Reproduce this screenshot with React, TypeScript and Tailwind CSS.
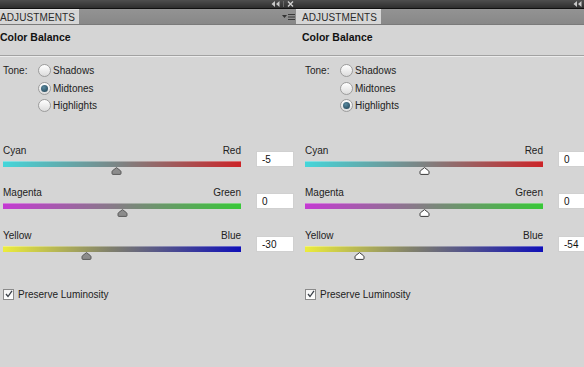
import React from "react";

type PanelProps = {
  tone: "Shadows" | "Midtones" | "Highlights";
  values: [number, number, number];
  activeThumb: boolean;
  showMenu: boolean;
};

const sliders = [
  { l: "Cyan", r: "Red", grad: "bg-[linear-gradient(to_right,#44d6da,#7e8282_50%,#cc2428)]" },
  { l: "Magenta", r: "Green", grad: "bg-[linear-gradient(to_right,#c43ad2,#828082_50%,#38c838)]" },
  { l: "Yellow", r: "Blue", grad: "bg-[linear-gradient(to_right,#ecec3c,#80806c_45%,#1010b8)]" },
];

function Radio({ on }: { on: boolean }) {
  return (
    <div className="w-[13px] h-[13px] rounded-full border border-[#9c9c9c] bg-[linear-gradient(#ffffff,#dcdcdc)] flex items-center justify-center">
      {on && <div className="w-[7px] h-[7px] rounded-full bg-[radial-gradient(circle_at_40%_35%,#5a8aa0,#1e3e50)]" />}
    </div>
  );
}

function Thumb({ active }: { active: boolean }) {
  return (
    <svg width="11" height="8" viewBox="0 0 11 8">
      <path
        d="M5.5 0.6 L9.6 3.8 Q10 4.2 10 5 L10 6.4 Q10 7.4 9 7.4 L2 7.4 Q1 7.4 1 6.4 L1 5 Q1 4.2 1.4 3.8 Z"
        fill={active ? "#ffffff" : "#8c8c8c"}
        stroke={active ? "#3a3a3a" : "#5a5a5a"}
        strokeWidth="1"
      />
    </svg>
  );
}

function Panel({ tone, values, activeThumb, showMenu }: PanelProps) {
  return (
    <div className="w-[302px] shrink-0 flex flex-col">
      {/* top bar */}
      <div className="h-[8px] bg-[linear-gradient(#4e4e4e,#2e2e2e)] flex items-center justify-end pr-[2px] gap-[3px]">
        <svg width="9" height="6" viewBox="0 0 9 6">
          <path d="M4 0 L0.5 3 L4 6 Z M8.5 0 L5 3 L8.5 6 Z" fill="#c8c8c8" />
        </svg>
        <div className="w-px h-[6px] bg-[#6a6a6a]" />
        <svg width="7" height="6" viewBox="0 0 7 6">
          <path d="M1 0.5 L6 5.5 M6 0.5 L1 5.5" stroke="#d0d0d0" strokeWidth="1.4" />
        </svg>
      </div>
      <div className="h-px bg-[#111]" />
      {/* tab strip */}
      <div className="h-[16px] bg-[linear-gradient(#939393,#888888)] flex items-stretch border-b border-[#7a7a7a]">
        <div className="w-[85px] bg-[#d6d6d6] border-t border-[#e6e6e6] pl-[6px] flex items-center text-[10px] text-[#2a2a2a] tracking-[0.1px]">
          ADJUSTMENTS
        </div>
        {showMenu && (
          <div className="ml-auto mr-[1px] flex items-center gap-[1px]">
            <svg width="5" height="3" viewBox="0 0 5 3">
              <path d="M0 0 L5 0 L2.5 3 Z" fill="#333" />
            </svg>
            <svg width="7" height="6" viewBox="0 0 7 6">
              <path d="M0 0.5 H7 M0 3 H7 M0 5.5 H7" stroke="#3a3a3a" strokeWidth="1" />
            </svg>
          </div>
        )}
      </div>
      {/* body */}
      <div className="flex flex-col">
        <div className="pl-[6px] pt-[6px] h-[19px] leading-[13px] text-[10.5px] font-bold text-[#111]">Color Balance</div>
        <div className="mt-[11px] h-px bg-[#a2a2a2]" />
        <div className="h-px bg-[#ececec]" />
        {/* Tone */}
        <div className="mt-[4px] flex pl-[9px]">
          <div className="w-[35px] h-[18px] flex items-center text-[10px] text-[#222]">Tone:</div>
          <div className="flex flex-col">
            {(["Shadows", "Midtones", "Highlights"] as const).map((t, i) => (
              <div key={t} className={`${i === 2 ? "h-[17px]" : "h-[18px]"} flex items-center gap-[2px]`}>
                <Radio on={t === tone} />
                <span className="text-[10px] text-[#222]">{t}</span>
              </div>
            ))}
          </div>
        </div>
        {/* sliders */}
        <div className="mt-[29px] flex flex-col pl-[9px]">
          {sliders.map((s, i) => {
            const v = values[i];
            const pos = ((v + 100) / 200) * 238;
            return (
              <div key={s.l} className={`flex ${i === 1 ? "h-[43px]" : "h-[42px]"}`}>
                <div className="w-[238px] flex flex-col">
                  <div className="mt-[2px] h-[12px] flex justify-between items-center text-[10px] text-[#222] leading-[12px]">
                    <span>{s.l}</span>
                    <span>{s.r}</span>
                  </div>
                  <div className={`mt-[4px] h-[6px] ${s.grad} border-t border-[#ffffff55]`} />
                  <div className="relative h-[8px]">
                    <div className="absolute top-0" style={{ left: pos - 5.5 }}>
                      <Thumb active={activeThumb} />
                    </div>
                  </div>
                </div>
                <div className="ml-[15px] mt-[8px] w-[38px] h-[16px] bg-white border border-[#d0d0d0] pl-[5px] flex items-center text-[10px] text-[#111]">
                  {v}
                </div>
              </div>
            );
          })}
        </div>
        {/* preserve luminosity */}
        <div className="mt-[18px] pl-[9px] flex items-center gap-[4px] h-[12px]">
          <div className="w-[11px] h-[11px] border border-[#8a8a8a] bg-[linear-gradient(#f4f4f4,#ffffff)] flex items-center justify-center">
            <svg width="8" height="8" viewBox="0 0 8 8">
              <path d="M1 4 L3 6.5 L7 0.8" fill="none" stroke="#3a4048" strokeWidth="1.3" />
            </svg>
          </div>
          <span className="text-[10px] text-[#222]">Preserve Luminosity</span>
        </div>
      </div>
    </div>
  );
}

export default function App() {
  return (
    <div
      className="w-[584px] h-[367px] overflow-hidden bg-[#d5d5d5]"
      style={{ fontFamily: '"Liberation Sans", Arial, sans-serif' }}
    >
      <div className="flex -ml-[6px] h-full">
        <Panel tone="Midtones" values={[-5, 0, -30]} activeThumb={false} showMenu={true} />
        <Panel tone="Highlights" values={[0, 0, -54]} activeThumb={true} showMenu={true} />
      </div>
    </div>
  );
}
